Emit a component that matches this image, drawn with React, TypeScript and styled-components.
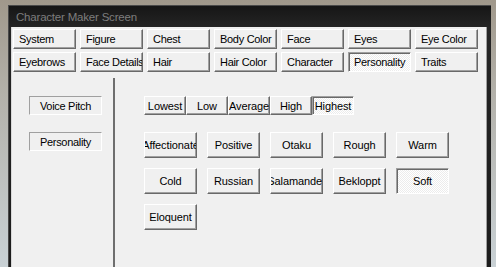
import React from "react";
import styled, { createGlobalStyle, css } from "styled-components";

const Global = createGlobalStyle`
  html, body { margin: 0; padding: 0; }
  body { width: 496px; height: 267px; overflow: hidden; font-family: "Liberation Sans", Arial, sans-serif; }
`;

const Page = styled.div`
  width: 496px;
  height: 267px;
  box-sizing: border-box;
  padding: 5px 5px 0 8px;
  display: flex;
  background: linear-gradient(180deg, #a0988b 0%, #b3b1aa 35%, #c9d1d5 100%);
`;

const Window = styled.div`
  flex: 1;
  display: flex;
  flex-direction: column;
  background: linear-gradient(180deg, #161616 0px, #252525 22px, #1c1c1c 100%);
  border-top: 1px solid #4a4a4a;
  border-left: 1px solid #4a4a4a;
  padding: 0 4px 0 2px;
`;

const TitleBar = styled.div`
  height: 21px;
  display: flex;
  align-items: center;
  padding-left: 5px;
  font-family: "Liberation Sans", Arial, sans-serif;
  font-size: 11.5px;
  color: #7d7d7d;
  letter-spacing: -0.2px;
`;

const Client = styled.div`
  flex: 1;
  display: flex;
  flex-direction: column;
  background: #f0f0f0;
  border-left: 1px solid #d8d8d8;
  border-right: 1px solid #a0a0a0;
  padding: 2px 0 0 1px;
  font-family: "Liberation Sans", Arial, sans-serif;
  font-size: 11px;
  letter-spacing: -0.3px;
  color: #000;
`;

const TabGrid = styled.div`
  display: grid;
  grid-template-columns: repeat(7, 63px);
  grid-auto-rows: 20px;
  column-gap: 4px;
  row-gap: 3px;
`;

const raised = css`
  border: 1px solid;
  border-color: #ffffff #696969 #696969 #ffffff;
  box-shadow: inset -1px -1px 0 #a0a0a0;
  background: #f0f0f0;
`;

const pressed = css`
  border: 1px solid;
  border-color: #a0a0a0 #ffffff #ffffff #a0a0a0;
  box-shadow: inset 1px 1px 0 #696969;
  background: repeating-conic-gradient(#ffffff 0 25%, #ececec 0 50%) 0 0 / 2px 2px;
`;

const ButtonBase = styled.div<{ $on?: boolean }>`
  box-sizing: border-box;
  display: flex;
  align-items: center;
  overflow: hidden;
  white-space: nowrap;
  ${(p) => (p.$on ? pressed : raised)}
`;

const TabButton = styled(ButtonBase)`
  padding-left: 5px;
  justify-content: flex-start;
`;

const CenterButton = styled(ButtonBase)`
  justify-content: center;
  letter-spacing: -0.1px;
`;

const Lower = styled.div`
  flex: 1;
  display: flex;
  margin-top: 6px;
`;

const LeftPanel = styled.div`
  width: 100px;
  box-sizing: border-box;
  padding: 18px 0 0 16px;
  display: flex;
  flex-direction: column;
  gap: 17px;
`;

const Label = styled.div`
  width: 73px;
  height: 19px;
  box-sizing: border-box;
  display: flex;
  align-items: center;
  justify-content: center;
  border: 1px solid;
  border-color: #a0a0a0 #ffffff #ffffff #a0a0a0;
`;

const Divider = styled.div`
  width: 2px;
  background: #6e6e6e;
`;

const RightPanel = styled.div`
  flex: 1;
  padding: 18px 0 0 29px;
  display: flex;
  flex-direction: column;
  gap: 17px;
`;

const PitchRow = styled.div`
  display: grid;
  grid-template-columns: repeat(5, 42px);
  grid-auto-rows: 19px;
`;

const TraitGrid = styled.div`
  display: grid;
  grid-template-columns: repeat(5, 53px);
  grid-auto-rows: 26px;
  column-gap: 10px;
  row-gap: 10px;
`;

const tabs = [
  "System", "Figure", "Chest", "Body Color", "Face", "Eyes", "Eye Color",
  "Eyebrows", "Face Details", "Hair", "Hair Color", "Character", "Personality", "Traits",
];
const pitches = ["Lowest", "Low", "Average", "High", "Highest"];
const traits = [
  "Affectionate", "Positive", "Otaku", "Rough", "Warm",
  "Cold", "Russian", "Salamander", "Bekloppt", "Soft",
  "Eloquent",
];

export default function App() {
  return (
    <>
      <Global />
      <Page>
        <Window>
          <TitleBar>Character Maker Screen</TitleBar>
          <Client>
            <TabGrid>
              {tabs.map((t) => (
                <TabButton key={t} $on={t === "Personality"}>{t}</TabButton>
              ))}
            </TabGrid>
            <Lower>
              <LeftPanel>
                <Label>Voice Pitch</Label>
                <Label>Personality</Label>
              </LeftPanel>
              <Divider />
              <RightPanel>
                <PitchRow>
                  {pitches.map((p) => (
                    <CenterButton key={p} $on={p === "Highest"}>{p}</CenterButton>
                  ))}
                </PitchRow>
                <TraitGrid>
                  {traits.map((t) => (
                    <CenterButton key={t} $on={t === "Soft"}>{t}</CenterButton>
                  ))}
                </TraitGrid>
              </RightPanel>
            </Lower>
          </Client>
        </Window>
      </Page>
    </>
  );
}
